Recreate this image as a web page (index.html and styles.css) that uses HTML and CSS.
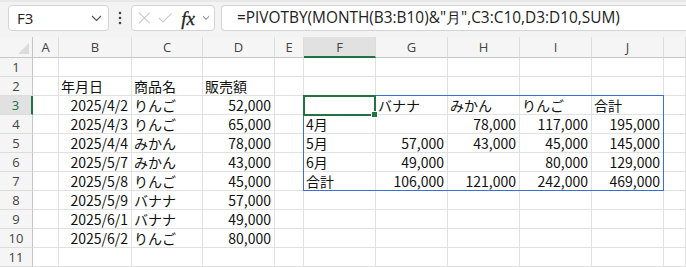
FILE: index.html
```html
<!DOCTYPE html>
<html lang="ja">

<head>
    <meta charset="UTF-8">
    <meta name="viewport" content="width=device-width, initial-scale=1.0">
    <title>PIVOTBY</title>

    <link rel="stylesheet" href="styles.css">
</head>

<body>
    <div class="formula-bar">
        <div class="name-box">
            <span>F3</span>
            <svg width="11" height="7" viewBox="0 0 11 7"><polyline points="1,1 5.5,5.5 10,1" fill="none" stroke="#555" stroke-width="1.2"/></svg>
        </div>
        <div class="dots">
            <svg width="4" height="14" viewBox="0 0 4 14"><circle cx="2" cy="2" r="1.3" fill="#444"/><circle cx="2" cy="7" r="1.3" fill="#444"/><circle cx="2" cy="12" r="1.3" fill="#444"/></svg>
        </div>
        <div class="fx-box">
            <svg width="14" height="14" viewBox="0 0 14 14"><path d="M1 1 L13 13 M13 1 L1 13" stroke="#c8c8c8" stroke-width="1.2" fill="none"/></svg>
            <svg width="16" height="12" viewBox="0 0 16 12"><polyline points="1,6 5.5,10.5 15,1" stroke="#c8c8c8" stroke-width="1.2" fill="none"/></svg>
            <span class="fx">fx</span>
            <svg width="9" height="6" viewBox="0 0 9 6"><polyline points="1,1 4.5,4.5 8,1" fill="none" stroke="#666" stroke-width="1.1"/></svg>
        </div>
        <div class="formula-input">=PIVOTBY(MONTH(B3:B10)&amp;"月",C3:C10,D3:D10,SUM)</div>
    </div>

    <div class="sheet" id="sheet">
        <div class="spill"></div>
        <div class="selection"><span class="handle"></span></div>
    </div>

    <script>
        const cols = ["A", "B", "C", "D", "E", "F", "G", "H", "I", "J", ""];

        const data = {
            B2: "年月日", C2: "商品名", D2: "販売額",
            B3: "2025/4/2", C3: "りんご", D3: "52,000",
            B4: "2025/4/3", C4: "りんご", D4: "65,000",
            B5: "2025/4/4", C5: "みかん", D5: "78,000",
            B6: "2025/5/7", C6: "みかん", D6: "43,000",
            B7: "2025/5/8", C7: "りんご", D7: "45,000",
            B8: "2025/5/9", C8: "バナナ", D8: "57,000",
            B9: "2025/6/1", C9: "バナナ", D9: "49,000",
            B10: "2025/6/2", C10: "りんご", D10: "80,000",
            G3: "バナナ", H3: "みかん", I3: "りんご", J3: "合計",
            F4: "4月", H4: "78,000", I4: "117,000", J4: "195,000",
            F5: "5月", G5: "57,000", H5: "43,000", I5: "45,000", J5: "145,000",
            F6: "6月", G6: "49,000", I6: "80,000", J6: "129,000",
            F7: "合計", G7: "106,000", H7: "121,000", I7: "242,000", J7: "469,000"
        };

        const sheet = document.getElementById("sheet");

        function addCell(cls, text, row, col) {
            const div = document.createElement("div");
            div.className = cls;
            div.textContent = text || "";
            div.style.gridArea = row + " / " + col;
            sheet.appendChild(div);
        }

        addCell("corner", "", 1, 1);
        cols.forEach((c, i) => addCell(c === "F" ? "col-head active" : "col-head", c, 1, i + 2));

        for (let r = 1; r <= 11; r++) {
            addCell(r === 3 ? "row-head active" : "row-head", r, r + 1, 1);
            cols.forEach((c, i) => {
                const text = data[c + r];
                const isNum = text && /^[0-9,\/]+$/.test(text);
                addCell(isNum ? "cell num" : "cell", text, r + 1, i + 2);
            });
        }
    </script>
</body>

</html>
```

FILE: styles.css
```css
body {
    margin: 0;
    background-color: #fff;
    font-family: "Noto Sans CJK JP", "Noto Sans", sans-serif;
    overflow: hidden;
}

.formula-bar {
    display: flex;
    align-items: center;
    height: 37px;
    box-sizing: border-box;
    padding: 1px 0 4px 8px;
    background-color: #f3f3f3;
    border-top: 2px solid #e8e8e8;
}

.name-box {
    display: flex;
    justify-content: space-between;
    align-items: center;
    width: 101px;
    height: 26px;
    box-sizing: border-box;
    padding: 0 6px 0 8px;
    background-color: #fff;
    border: 1px solid #d4d4d4;
    border-radius: 4px;
    font-family: "Open Sans", "Noto Sans", sans-serif;
    font-size: 15px;
    color: #222;
}

.dots {
    display: flex;
    width: 22px;
    justify-content: center;
}

.fx-box {
    display: flex;
    align-items: center;
    gap: 7px;
    width: 84px;
    height: 26px;
    box-sizing: border-box;
    padding: 0 4px 0 6px;
    background-color: #fff;
    border: 1px solid #d4d4d4;
    border-radius: 4px;
}

.fx {
    font-family: "Liberation Serif", serif;
    font-style: italic;
    font-size: 19px;
    color: #222;
    margin-left: 2px;
    line-height: 1;
    -webkit-text-stroke: 0.3px #222;
}

.formula-input {
    flex: 1;
    height: 26px;
    margin-left: 6px;
    box-sizing: border-box;
    padding-left: 15px;
    background-color: #fff;
    border: 1px solid #d4d4d4;
    border-right: none;
    border-radius: 4px 0 0 4px;
    font-family: "Open Sans", "Noto Sans", sans-serif;
    font-size: 15.4px;
    line-height: 24px;
    color: #222;
    white-space: nowrap;
}

.sheet {
    display: grid;
    grid-template-columns: 33px 26px 73px 71px 72px 29px 72px 72px 72px 72px 72px 1fr;
    grid-template-rows: 21px repeat(11, 19px);
    font-size: 14px;
    color: #111;
}

.corner {
    background-color: #f5f5f5;
    border-right: 1px solid #c6c6c6;
    border-bottom: 1px solid #c6c6c6;
    box-sizing: border-box;
    position: relative;
}

.corner::after {
    content: "";
    position: absolute;
    right: 3px;
    bottom: 3px;
    border-style: solid;
    border-width: 0 0 11px 11px;
    border-color: transparent transparent #dcdcdc transparent;
}

.col-head {
    display: flex;
    justify-content: center;
    align-items: flex-end;
    padding-bottom: 1px;
    background-color: #f5f5f5;
    border-right: 1px solid #dcdcdc;
    border-bottom: 1px solid #c6c6c6;
    box-sizing: border-box;
    font-family: "Open Sans", "Noto Sans", sans-serif;
    font-size: 13px;
    line-height: 17px;
    color: #444;
}

.col-head.active {
    background-color: #e1e1e1;
    border-bottom: 2px solid #217346;
    padding-bottom: 0;
}

.row-head {
    display: flex;
    justify-content: center;
    align-items: center;
    background-color: #f5f5f5;
    border-right: 1px solid #c6c6c6;
    border-bottom: 1px solid #dcdcdc;
    box-sizing: border-box;
    font-family: "Open Sans", "Noto Sans", sans-serif;
    font-size: 13px;
    color: #444;
}

.row-head.active {
    background-color: #e1e1e1;
    border-right: 2px solid #217346;
    color: #217346;
}

.cell {
    border-right: 1px solid #e1e1e1;
    border-bottom: 1px solid #e1e1e1;
    box-sizing: border-box;
    padding: 0 2px;
    line-height: 18px;
    white-space: nowrap;
    overflow: hidden;
}

.cell.num {
    text-align: right;
    padding-right: 3px;
}

.spill {
    grid-column: 7 / 12;
    grid-row: 4 / 9;
    margin: -1px 0 0 -1px;
    border: 1px solid #3c6fd4;
    pointer-events: none;
    z-index: 1;
}

.selection {
    grid-column: 7 / 8;
    grid-row: 4 / 5;
    margin: -1px 0 -1px -1px;
    border: 2px solid #217346;
    position: relative;
    z-index: 2;
}

.handle {
    position: absolute;
    right: -4px;
    bottom: -4px;
    width: 5px;
    height: 5px;
    background-color: #217346;
    border: 1px solid #fff;
}
```
